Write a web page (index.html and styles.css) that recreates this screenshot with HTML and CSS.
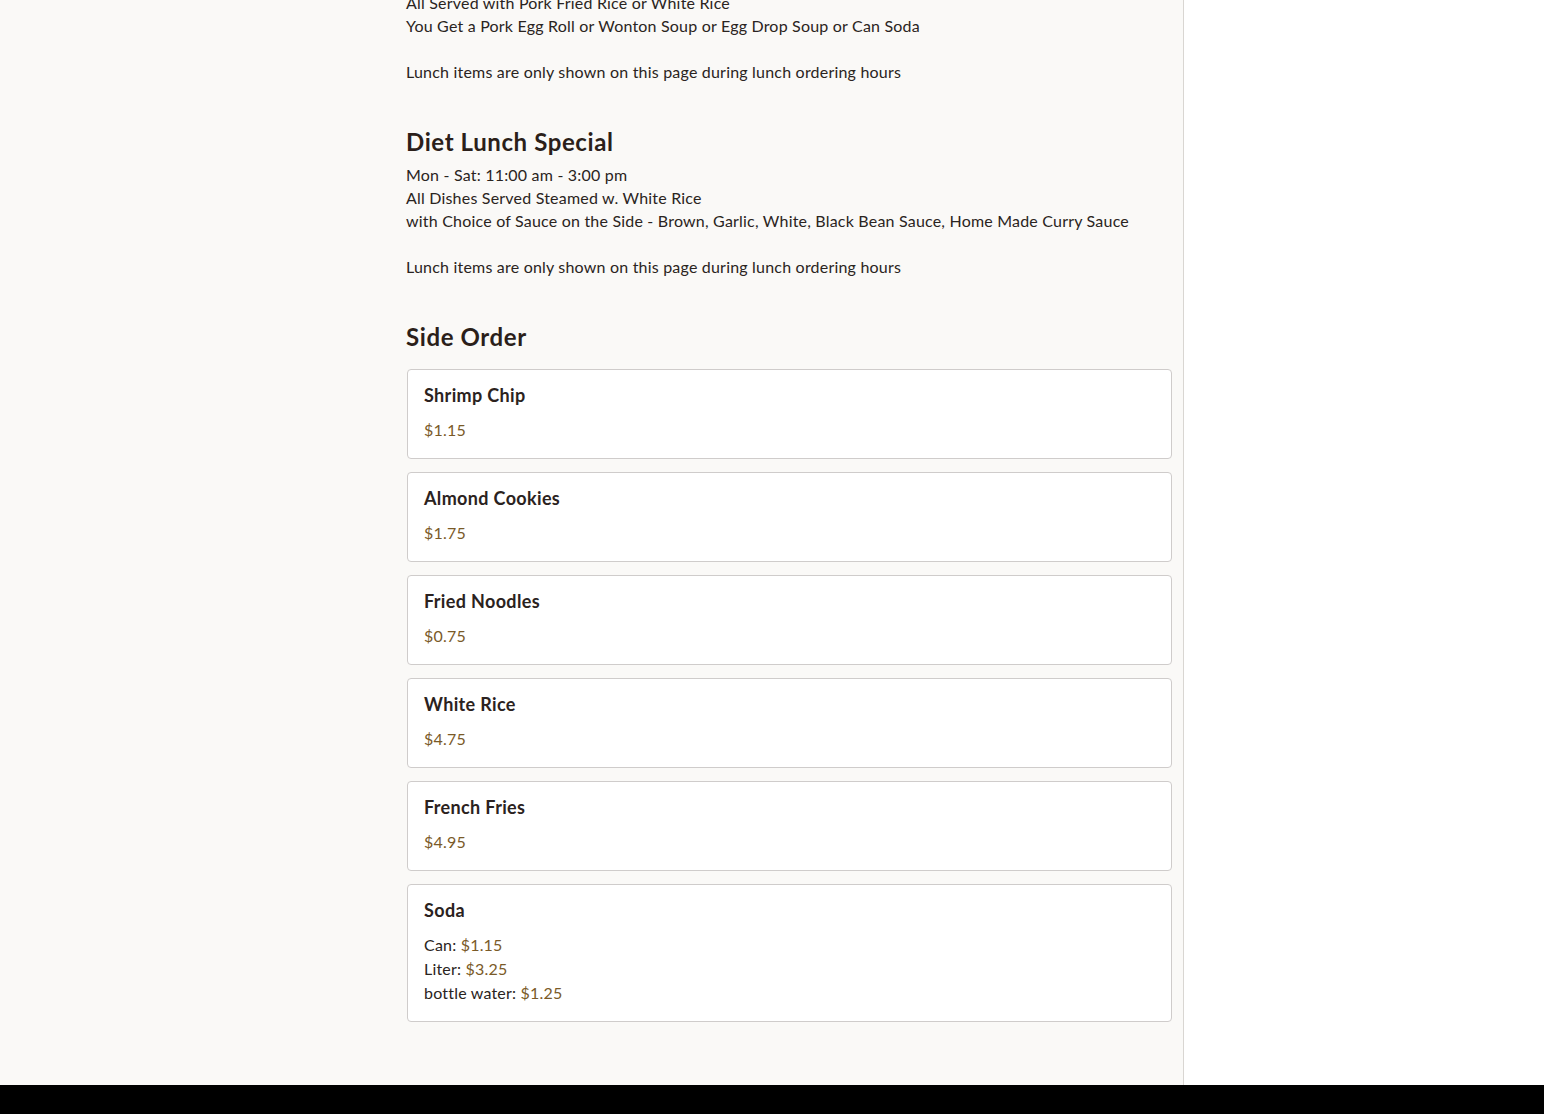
FILE: index.html
```html
<!DOCTYPE html>
<html lang="en">
<head>
<meta charset="utf-8">
<title>Menu</title>
<link rel="stylesheet" href="styles.css">
</head>
<body>
<div class="page">
  <main class="main">
    <div class="content">
      <section class="category first">
        <div class="desc">
          <p>All Served with Pork Fried Rice or White Rice</p>
          <p>You Get a Pork Egg Roll or Wonton Soup or Egg Drop Soup or Can Soda</p>
          <p>&nbsp;</p>
          <p>Lunch items are only shown on this page during lunch ordering hours</p>
        </div>
      </section>
      <section class="category">
        <h2 class="cat-title">Diet Lunch Special</h2>
        <div class="desc">
          <p>Mon - Sat: 11:00 am - 3:00 pm</p>
          <p>All Dishes Served Steamed w. White Rice</p>
          <p>with Choice of Sauce on the Side - Brown, Garlic, White, Black Bean Sauce, Home Made Curry Sauce</p>
          <p>&nbsp;</p>
          <p>Lunch items are only shown on this page during lunch ordering hours</p>
        </div>
      </section>
      <section class="category">
        <h2 class="cat-title">Side Order</h2>
        <div class="items">
          <div class="item">
            <h3 class="item-name">Shrimp Chip</h3>
            <div class="prices"><span class="price">$1.15</span></div>
          </div>
          <div class="item">
            <h3 class="item-name">Almond Cookies</h3>
            <div class="prices"><span class="price">$1.75</span></div>
          </div>
          <div class="item">
            <h3 class="item-name">Fried Noodles</h3>
            <div class="prices"><span class="price">$0.75</span></div>
          </div>
          <div class="item">
            <h3 class="item-name">White Rice</h3>
            <div class="prices"><span class="price">$4.75</span></div>
          </div>
          <div class="item">
            <h3 class="item-name">French Fries</h3>
            <div class="prices"><span class="price">$4.95</span></div>
          </div>
          <div class="item">
            <h3 class="item-name">Soda</h3>
            <div class="prices">
              <div>Can: <span class="price">$1.15</span></div>
              <div>Liter: <span class="price">$3.25</span></div>
              <div>bottle water: <span class="price">$1.25</span></div>
            </div>
          </div>
        </div>
      </section>
    </div>
  </main>
  <aside class="side"></aside>
</div>
<footer class="footer"></footer>
</body>
</html>
```
FILE: styles.css
```css
* { box-sizing: border-box; }
html, body { margin: 0; padding: 0; }
body {
  font-family: "Lato", "Noto Sans", sans-serif;
  font-size: 16px;
  line-height: 23px;
  letter-spacing: 0.2px;
  color: #2a2421;
  background: #ffffff;
  overflow: hidden;
}
.page {
  display: flex;
  height: 1085px;
}
.main {
  width: 1184px;
  background: #faf9f7;
  border-right: 1px solid #d9d6d2;
  overflow: hidden;
}
.content {
  margin-left: 406px;
  width: 766px;
  margin-top: -9px;
}
.side { flex: 1; background: #ffffff; }
.desc p { margin: 0; }
.category { margin-bottom: 43px; }
.cat-title {
  margin: 0 0 5px;
  font-size: 24px;
  line-height: 32px;
  font-weight: 700;
  letter-spacing: 0.6px;
  color: #2b1f1a;
}
.items {
  display: flex;
  flex-direction: column;
  gap: 13px;
  margin-top: 16px;
  padding-left: 1px;
}
.item {
  background: #ffffff;
  border: 1px solid #cfcccb;
  border-radius: 4px;
  padding: 13px 16px 16px;
}
.item-name {
  margin: 0 0 11px;
  font-size: 18px;
  line-height: 24px;
  font-weight: 700;
  letter-spacing: 0.35px;
  color: #2b2220;
}
.prices { line-height: 24px; }
.price { color: #7a5a28; }
.footer {
  height: 29px;
  background: #000000;
}
```
